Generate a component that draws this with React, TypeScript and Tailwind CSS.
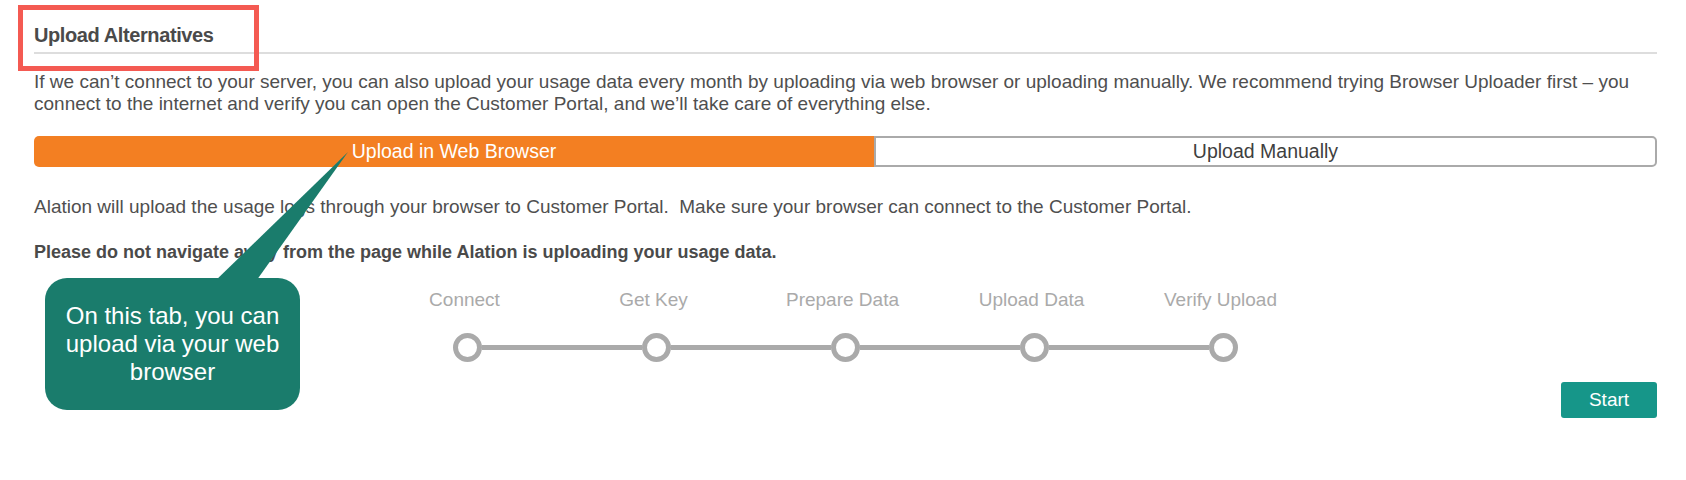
import React from "react";

const steps = ["Connect", "Get Key", "Prepare Data", "Upload Data", "Verify Upload"];

export default function App() {
  return (
    <div className="relative w-[1686px] h-[480px] bg-white font-['Liberation_Sans',Arial,sans-serif] text-[#4f4f4f] overflow-hidden">
      <div className="pl-[34px] pr-[29px]">
        {/* header */}
        <div className="pt-[23px] pb-[5px] border-b-2 border-[#dddddd]">
          <h2 className="text-[20px] leading-[24px] font-bold tracking-[-0.4px] text-[#4a4a4a]">Upload Alternatives</h2>
        </div>

        <p className="mt-[17px] text-[19px] leading-[22px]">
          If we can’t connect to your server, you can also upload your usage data every month by uploading via web browser or uploading manually. We recommend trying Browser Uploader first – you
          <br />
          connect to the internet and verify you can open the Customer Portal, and we’ll take care of everything else.
        </p>

        {/* tabs */}
        <div className="mt-[21px] flex h-[31px]">
          <div className="w-[840px] rounded-l-[5px] bg-[#f37f22] flex items-center justify-center text-[19.5px] text-white">
            Upload in Web Browser
          </div>
          <div className="flex-1 rounded-r-[5px] border-2 border-[#aaaaaa] bg-white flex items-center justify-center text-[19.5px] text-[#3f3f3f]">
            Upload Manually
          </div>
        </div>

        <p className="mt-[29px] text-[19px] leading-[22px] whitespace-pre">
          Alation will upload the usage logs through your browser to Customer Portal.  Make sure your browser can connect to the Customer Portal.
        </p>
        <p className="mt-[23px] text-[18px] leading-[22px] font-bold text-[#4a4a4a]">
          Please do not navigate away from the page while Alation is uploading your usage data.
        </p>

        {/* steps */}
        <div className="mt-[26px] ml-[336px] grid grid-cols-[repeat(5,189px)] text-[19px] leading-[22px] text-[#aaaaaa]">
          {steps.map((s) => (
            <div key={s} className="text-center">{s}</div>
          ))}
        </div>
        <div className="mt-[22px] ml-[419px] flex items-center">
          {steps.map((s, i) => (
            <React.Fragment key={s}>
              {i > 0 && <div className="w-[160px] h-[5px] bg-[#aaaaaa]" />}
              <div className="w-[29px] h-[29px] rounded-full border-[5px] border-[#aaaaaa] bg-white shrink-0" />
            </React.Fragment>
          ))}
        </div>

        <div className="mt-[20px] flex justify-end">
          <button className="w-[96px] h-[36px] rounded-[3px] bg-[#169689] text-white text-[19px]">Start</button>
        </div>
      </div>

      {/* annotation box */}
      <div className="absolute left-[18px] top-[5px] w-[241px] h-[66px] border-[5px] border-[#f45a52]" />

      {/* callout */}
      <svg className="absolute left-0 top-0" width="400" height="300" viewBox="0 0 400 300">
        <polygon points="212,284 254,284 348,152" fill="#1a7c6c" />
      </svg>
      <div className="absolute left-[45px] top-[278px] w-[255px] h-[132px] rounded-[22px] bg-[#1a7c6c] flex items-center justify-center text-center text-white text-[24px] leading-[28px]">
        On this tab, you can
        <br />
        upload via your web
        <br />
        browser
      </div>
    </div>
  );
}
